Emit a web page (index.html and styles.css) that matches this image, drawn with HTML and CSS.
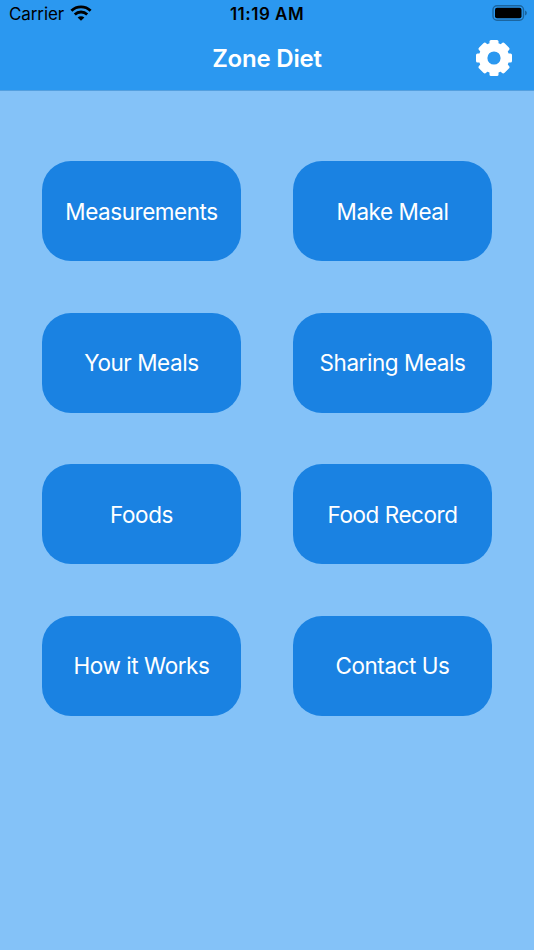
FILE: index.html
```html
<!DOCTYPE html>
<html lang="en">
  <head>
    <meta charset="UTF-8">
    <meta name="viewport" content="width=device-width, initial-scale=1">
    <title>Zone Diet</title>
    <link rel="stylesheet" href="styles.css">
  </head>
  <body>
    <header class="header">
      <div class="status">
        <div class="status__carrier">
          <span>Carrier</span>
          <svg class="wifi" viewBox="0 0 22 16" width="22" height="16">
            <path d="M1.4 5.7a13.8 13.8 0 0 1 19.2 0M4.8 9.5a8.9 8.9 0 0 1 12.4 0" fill="none" stroke="#000" stroke-width="2.8"/>
            <path d="M11 15.8l-3.400-3.300a4.900 4.900 0 0 1 6.800 0z"/>
          </svg>
        </div>
        <div class="status__time">11:19 AM</div>
        <svg class="battery" viewBox="0 0 36 16" width="36" height="16">
          <rect x="1" y="0.8" width="30.5" height="14.4" rx="4" fill="none" stroke="#1b659f" stroke-width="1.4"/>
          <rect x="3" y="2.8" width="26.5" height="10.4" rx="2"/>
          <path d="M33 5.5c2.5.8 2.5 4.2 0 5z" fill="#1b659f"/>
        </svg>
      </div>
      <div class="navbar">
        <h1 class="navbar__title">Zone Diet</h1>
        <button class="settings" aria-label="Settings">
          <svg viewBox="-18 -18 36 36" width="36" height="36">
            <g fill="#fff">
              <rect x="-4.5" y="-18" width="9" height="36" rx="1.5"/>
              <rect x="-5" y="-18" width="10" height="36" rx="2"  transform="rotate(45)"/>
              <rect x="-4.5" y="-18" width="9" height="36" rx="1.5" transform="rotate(90)"/>
              <rect x="-5" y="-18" width="10" height="36" rx="2" transform="rotate(135)"/>
              <circle r="15.2"/>
            </g>
            <circle r="6.6" fill="#2b98f0"/>
          </svg>
        </button>
      </div>
    </header>
    <main class="menu">
      <button class="menu__item">Measurements</button>
      <button class="menu__item">Make Meal</button>
      <button class="menu__item">Your Meals</button>
      <button class="menu__item">Sharing Meals</button>
      <button class="menu__item">Foods</button>
      <button class="menu__item">Food Record</button>
      <button class="menu__item">How it Works</button>
      <button class="menu__item">Contact Us</button>
    </main>
  </body>
</html>
```
FILE: styles.css
```css
body {
  margin: 0;
  min-height: 100vh;
  background-color: #84c2f8;
  font-family: Inter, sans-serif;
}
button {
  border: none;
  padding: 0;
  font-family: inherit;
  color: #fff;
  cursor: pointer;
}
.header {
  box-sizing: border-box;
  height: 91px;
  background-color: #2b98f0;
  border-bottom: 1px solid #549fdf;
}
.status {
  height: 27px;
  padding: 0 6px 0 9px;
  display: grid;
  grid-template-columns: 1fr auto 1fr;
  align-items: center;
  font-size: 17px;
}
.status__carrier {
  display: flex;
  align-items: center;
  gap: 7px;
  letter-spacing: -0.1px;
}
.wifi {
  margin-left: -1px;
  margin-top: -2px;
}
.status__time {
  margin-right: 3px;
  font-weight: 600;
  letter-spacing: 0.5px;
}
.battery {
  justify-self: end;
  margin-top: -1px;
}
.navbar {
  height: 62px;
  padding: 0 22px;
  display: grid;
  grid-template-columns: 1fr auto 1fr;
  align-items: center;
}
.navbar__title {
  grid-column: 2;
  margin: 0;
  color: #fff;
  font-size: 24px;
  font-weight: 600;
  letter-spacing: -0.2px;
}
.settings {
  justify-self: end;
  height: 36px;
  background: transparent;
}
.menu {
  padding: 70px 42px;
  display: grid;
  grid-template-columns: 199px 199px;
  justify-content: space-between;
  row-gap: 51.5px;
}
.menu__item {
  height: 100px;
  border-radius: 29px;
  background-color: #1a82e2;
  font-size: 22.5px;
  letter-spacing: -0.45px;
}
```
